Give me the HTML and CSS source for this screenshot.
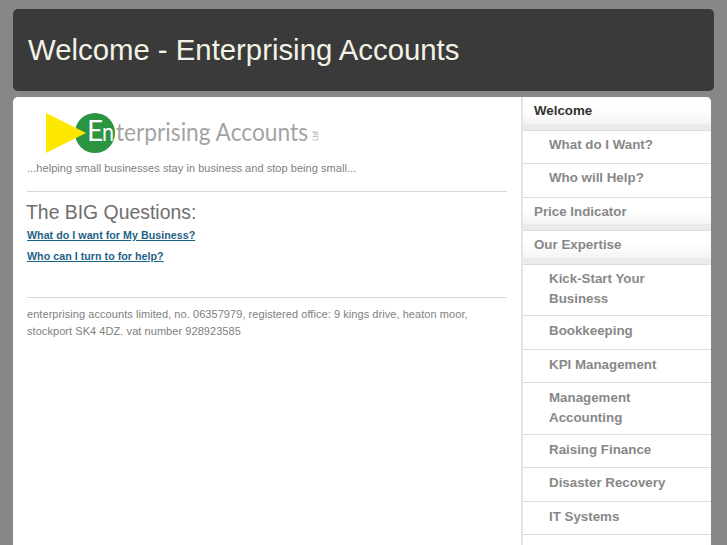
FILE: index.html
```html
<!DOCTYPE html>
<html>

<head>
    <title>Welcome - Enterprising Accounts</title>
    <link rel="stylesheet" href="styles.css">
</head>

<body>

    <div class="header">
        <h1>Welcome - Enterprising Accounts</h1>
    </div>

    <div class="main">
        <div class="content">
            <svg class="logo" width="300" height="46" viewBox="0 0 300 46">
                <circle cx="50" cy="23" r="20" fill="#2b9440" />
                <polygon points="1,3 1,43 41,23" fill="#ffe800" />
                <text x="42" y="31" class="logo-e">E</text>
                <text x="57" y="31" class="logo-n" textLength="12" lengthAdjust="spacingAndGlyphs">n</text>
                <text x="71" y="31" class="logo-text" textLength="192" lengthAdjust="spacingAndGlyphs">terprising Accounts</text>
                <text transform="translate(273 31) rotate(-90)" class="logo-ltd">Ltd</text>
            </svg>
            <p class="tagline">...helping small businesses stay in business and stop being small...</p>
            <hr>
            <h2>The BIG Questions:</h2>
            <p class="question"><a href="#">What do I want for My Business?</a></p>
            <p class="question"><a href="#">Who can I turn to for help?</a></p>
            <hr class="lower">
            <p class="footer">enterprising accounts limited, no. 06357979, registered office: 9 kings drive, heaton moor, stockport SK4 4DZ. vat number 928923585</p>
        </div>

        <ul class="nav">
            <li class="top current"><a href="#">Welcome</a></li>
            <li class="sub tight"><a href="#">What do I Want?</a></li>
            <li class="sub tight"><a href="#">Who will Help?</a></li>
            <li class="top"><a href="#">Price Indicator</a></li>
            <li class="top"><a href="#">Our Expertise</a></li>
            <li class="sub two tight"><a href="#">Kick-Start Your Business</a></li>
            <li class="sub"><a href="#">Bookkeeping</a></li>
            <li class="sub"><a href="#">KPI Management</a></li>
            <li class="sub two"><a href="#">Management Accounting</a></li>
            <li class="sub"><a href="#">Raising Finance</a></li>
            <li class="sub"><a href="#">Disaster Recovery</a></li>
            <li class="sub"><a href="#">IT Systems</a></li>
            <li class="sub last"></li>
        </ul>
    </div>

</body>

</html>
```

FILE: styles.css
```css
html,
body {
    height: 100%;
    overflow: hidden;
}

body {
    margin: 0;
    background-color: #878787;
    font-family: "Liberation Sans", Arial, sans-serif;
    display: flex;
    flex-direction: column;
    padding: 9px 13px 0;
    box-sizing: border-box;
}

.header {
    background-color: #3a3a3a;
    border-radius: 5px;
    height: 82px;
    display: flex;
    align-items: center;
    padding-left: 15px;
    margin-bottom: 6px;
    flex-shrink: 0;
}

h1 {
    margin: 0;
    color: #f2f2e6;
    font-size: 29.33px;
    font-weight: normal;
}

.main {
    flex: 1;
    width: 698px;
    display: flex;
    background-color: #fff;
    border-radius: 5px 5px 0 0;
    overflow: hidden;
}

.content {
    width: 480px;
    margin-left: 14px;
    margin-right: 14px;
}

.logo {
    display: block;
    margin: 13px 0 0 18px;
}

.logo-e {
    font-family: "Lato", sans-serif;
    font-size: 28px;
    fill: #fff;
}

.logo-n {
    font-family: "Lato", sans-serif;
    font-size: 25px;
    fill: #fff;
}

.logo-text {
    font-family: "Lato", sans-serif;
    font-size: 25px;
    fill: #a3a3a3;
}

.logo-ltd {
    font-family: "Lato", sans-serif;
    font-size: 7px;
    fill: #a3a3a3;
}

.tagline {
    margin: 3px 0 0;
    font-size: 11px;
    line-height: 18px;
    letter-spacing: 0.05px;
    color: #808080;
}

hr {
    border: none;
    border-top: 1px solid #d8d8d8;
    margin: 14px 0 0;
}

hr.lower {
    margin-top: 30px;
}

h2 {
    margin: 8px 0 0 -1px;
    padding-bottom: 1px;
    font-size: 19.4px;
    line-height: 24px;
    font-weight: normal;
    color: #6e6e6e;
}

.question {
    margin: 0;
    font-size: 10.67px;
    line-height: 21px;
    letter-spacing: 0.04px;
    font-weight: bold;
}

.question a {
    color: #1d6286;
}

.footer {
    margin: 8px 0 0;
    font-size: 11px;
    line-height: 17px;
    letter-spacing: 0.06px;
    color: #808080;
}

.nav {
    list-style: none;
    margin: 0;
    padding: 0;
    width: 190px;
    border-left: 2px solid #e4e4e4;
    box-sizing: border-box;
}

.nav li {
    border-bottom: 1px solid #ddd;
    padding: 5px 10px 7.5px 11px;
    font-size: 13.33px;
    line-height: 20px;
    font-weight: bold;
}

.nav a {
    color: #888;
    text-decoration: none;
    display: block;
}

.nav .top {
    padding-top: 4px;
    padding-bottom: 8.5px;
    background: linear-gradient(to bottom, #fff 0%, #fff 35%, #f6f3f4 80%, #ebebeb 82%, #ebebeb 100%);
}

.nav .current a {
    color: #333;
}

.nav .sub {
    padding-left: 26px;
}

.nav .tight {
    padding-top: 4px;
    padding-bottom: 8.5px;
}

.nav .two {
    padding-bottom: 5.5px;
}

.nav .two.tight {
    padding-bottom: 6.5px;
}

.nav .last {
    border-bottom: none;
}
```
